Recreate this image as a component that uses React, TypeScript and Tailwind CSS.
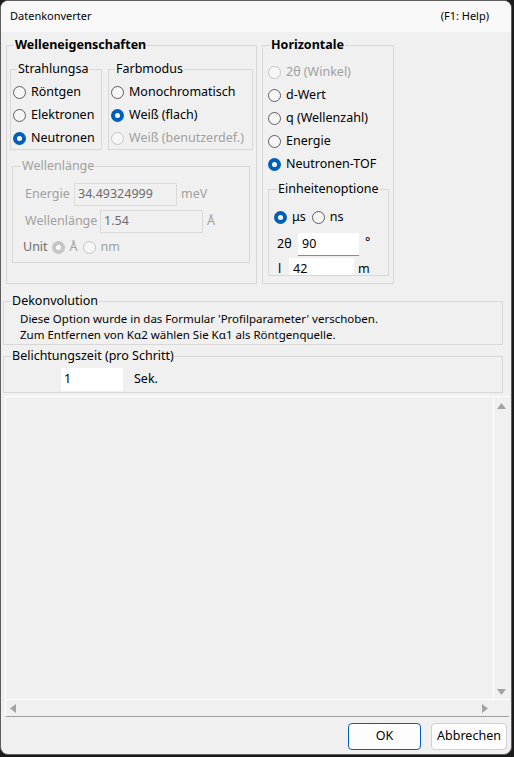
import clsx from "clsx";
import type { ReactNode } from "react";

const Radio = ({ checked = false, disabled = false }: { checked?: boolean; disabled?: boolean }) => {
  if (checked) {
    return (
      <span
        className={clsx(
          "flex h-[13px] w-[13px] shrink-0 items-center justify-center rounded-full",
          disabled ? "bg-[#c5c5c5]" : "bg-[#005fb8]"
        )}
      >
        <span className="h-[5px] w-[5px] rounded-full bg-white" />
      </span>
    );
  }
  return (
    <span
      className={clsx(
        "block h-[13px] w-[13px] shrink-0 rounded-full border bg-[#f6f6f6]",
        disabled ? "border-[#c5c5c5]" : "border-[#5d5d5d]"
      )}
    />
  );
};

const RadioRow = ({ label, checked, disabled }: { label: string; checked?: boolean; disabled?: boolean }) => (
  <div className="flex h-[23px] items-center gap-[5px]">
    <Radio checked={checked} disabled={disabled} />
    <span className={disabled ? "text-[#a0a0a0]" : "text-black"}>{label}</span>
  </div>
);

const Group = ({
  title,
  bold,
  disabled,
  className,
  legendClass = "ml-[6px]",
  children,
}: {
  title: string;
  bold?: boolean;
  disabled?: boolean;
  className?: string;
  legendClass?: string;
  children?: ReactNode;
}) => (
  <fieldset className={clsx("min-w-0 shrink-0 border border-[#d8d8d8]", className)}>
    <legend
      className={clsx(
        "px-[1px] leading-[18px]",
        bold ? "text-[12.5px] font-bold" : "text-[12.5px]",
        disabled ? "text-[#a0a0a0]" : "text-black",
        legendClass
      )}
    >
      {title}
    </legend>
    {children}
  </fieldset>
);

const Arrow = ({ dir }: { dir: "up" | "down" | "left" | "right" }) => {
  const pts = {
    up: "0,6 4.5,0 9,6",
    down: "0,0 9,0 4.5,6",
    left: "6,0 6,9 0,4.5",
    right: "0,0 0,9 6,4.5",
  }[dir];
  const vertical = dir === "up" || dir === "down";
  return (
    <svg width={vertical ? 9 : 6} height={vertical ? 6 : 9} viewBox={vertical ? "0 0 9 6" : "0 0 6 9"}>
      <polygon points={pts} fill="#a3a3a3" />
    </svg>
  );
};

export default function App() {
  return (
    <div className="h-[757px] w-[514px] bg-[#1b1b1b]">
      <div className="flex h-[755px] w-[512px] flex-col overflow-hidden rounded-[8px] border border-[#5f5f5f] bg-[#f0f0f0] font-['Noto_Sans',sans-serif] text-[12.5px] text-black">
        {/* title bar */}
        <div className="flex h-[31px] shrink-0 items-center justify-between bg-[#f9f9f9] pl-[9px] pr-[22px] text-[11px]">
          <span>Datenkonverter</span>
          <span>(F1: Help)</span>
        </div>

        <div className="ml-[5px] mt-[4px] flex gap-[5px]">
          <Group title="Welleneigenschaften" bold className="h-[248px] w-[251px]" legendClass="ml-[7px]">
            <div className="px-[3px] pt-[6px]">
              <div className="flex gap-[6px]">
                <Group title="Strahlungsa" className="h-[90px] w-[92px]">
                  <div className="pl-[2px] pt-[3px]">
                    <RadioRow label="Röntgen" />
                    <RadioRow label="Elektronen" />
                    <RadioRow label="Neutronen" checked />
                  </div>
                </Group>
                <Group title="Farbmodus" className="h-[90px] w-[145px]">
                  <div className="pl-[2px] pt-[3px]">
                    <RadioRow label="Monochromatisch" />
                    <RadioRow label="Weiß (flach)" checked />
                    <RadioRow label="Weiß (benutzerdef.)" disabled />
                  </div>
                </Group>
              </div>

              <Group title="Wellenlänge" disabled className="ml-[2px] mt-[7px] h-[106px] w-[238px]" legendClass="ml-[8px]">
                <div className="flex flex-col pl-[12px] pt-[8px] text-[#a0a0a0]">
                  <div className="flex h-[23px] items-center">
                    <span className="w-[49px]">Energie</span>
                    <div className="flex h-[23px] w-[103px] items-center border border-[#dadada] px-[3px] text-[#6d6d6d]">
                      34.49324999
                    </div>
                    <span className="ml-[4px]">meV</span>
                  </div>
                  <div className="mt-[4px] flex h-[23px] items-center">
                    <span className="w-[75px]">Wellenlänge</span>
                    <div className="flex h-[23px] w-[103px] items-center border border-[#dadada] px-[3px] text-[#6d6d6d]">
                      1.54
                    </div>
                    <span className="ml-[4px]">Å</span>
                  </div>
                  <div className="-ml-[2px] mt-[3px] flex h-[23px] items-center">
                    <span className="text-[#6d6d6d]">Unit</span>
                    <span className="ml-[4px] flex">
                      <Radio checked disabled />
                    </span>
                    <span className="ml-[5px]">Å</span>
                    <span className="ml-[5px] flex">
                      <Radio disabled />
                    </span>
                    <span className="ml-[5px]">nm</span>
                  </div>
                </div>
              </Group>
            </div>
          </Group>

          <Group title="Horizontale" bold className="h-[248px] w-[132px]" legendClass="ml-[7px]">
            <div className="pl-[5px] pt-[7px]">
              <RadioRow label="2θ (Winkel)" disabled />
              <RadioRow label="d-Wert" />
              <RadioRow label="q (Wellenzahl)" />
              <RadioRow label="Energie" />
              <RadioRow label="Neutronen-TOF" checked />
              <Group title="Einheitenoptione" className="mt-[4px] h-[96px] w-[121px] overflow-hidden" legendClass="ml-[8px]">
                <div className="pl-[5px] pt-[8px]">
                  <div className="flex h-[23px] items-center">
                    <Radio checked />
                    <span className="ml-[5px]">μs</span>
                    <span className="ml-[6px] flex">
                      <Radio />
                    </span>
                    <span className="ml-[5px]">ns</span>
                  </div>
                  <div className="mt-[4px] flex h-[23px] items-center">
                    <span className="w-[24px] pl-[3px]">2θ</span>
                    <div className="flex h-[23px] w-[61px] items-center border-b border-[#8a8a8a] bg-white px-[4px]">90</div>
                    <span className="ml-[6px] self-start">°</span>
                  </div>
                  <div className="mt-[2px] flex h-[23px] items-center">
                    <span className="w-[15px] pl-[4px]">l</span>
                    <div className="flex h-[23px] w-[65px] items-center bg-white px-[4px]">42</div>
                    <span className="ml-[4px]">m</span>
                  </div>
                </div>
              </Group>
            </div>
          </Group>
        </div>

        <Group title="Dekonvolution" className="ml-[2px] mt-[8px] h-[53px] w-[500px]" legendClass="ml-[7px]">
          <div className="pl-[16px] pt-[1px] text-[11.5px] leading-[16px]">
            <p>Diese Option wurde in das Formular 'Profilparameter' verschoben.</p>
            <p>Zum Entfernen von Kα2 wählen Sie Kα1 als Röntgenquelle.</p>
          </div>
        </Group>

        <Group title="Belichtungszeit (pro Schritt)" className="ml-[2px] mt-[2px] h-[46px] w-[500px]" legendClass="ml-[7px]">
          <div className="flex items-center pl-[57px] pt-[3px]">
            <div className="flex h-[23px] w-[62px] items-center bg-white px-[3px]">1</div>
            <span className="ml-[11px]">Sek.</span>
          </div>
        </Group>

        {/* output area with scrollbars */}
        <div className="ml-[4px] mt-[3px] flex h-[321px] w-[504px] shrink-0 flex-col border-b border-l border-t border-b-[#a0a0a0] border-l-white border-t-white">
          <div className="flex min-h-0 flex-1">
            <div className="flex-1" />
            <div className="flex w-[16px] flex-col items-center justify-between border-l border-white pb-[4px] pt-[6px]">
              <Arrow dir="up" />
              <Arrow dir="down" />
            </div>
          </div>
          <div className="flex h-[17px] shrink-0 border-t border-white">
            <div className="flex flex-1 items-center justify-between pl-[4px] pr-[4px]">
              <Arrow dir="left" />
              <Arrow dir="right" />
            </div>
            <div className="w-[17px]" />
          </div>
        </div>

        <div className="mt-[6px] flex justify-end gap-[10px] pr-[4px]">
          <button className="h-[27px] w-[73px] rounded-[4px] border border-[#005fb8] bg-[#fdfdfd] text-[12.5px]">OK</button>
          <button className="h-[27px] w-[76px] rounded-[4px] border border-[#d0d0d0] bg-[#fdfdfd] text-[12.5px]">Abbrechen</button>
        </div>
      </div>
    </div>
  );
}
